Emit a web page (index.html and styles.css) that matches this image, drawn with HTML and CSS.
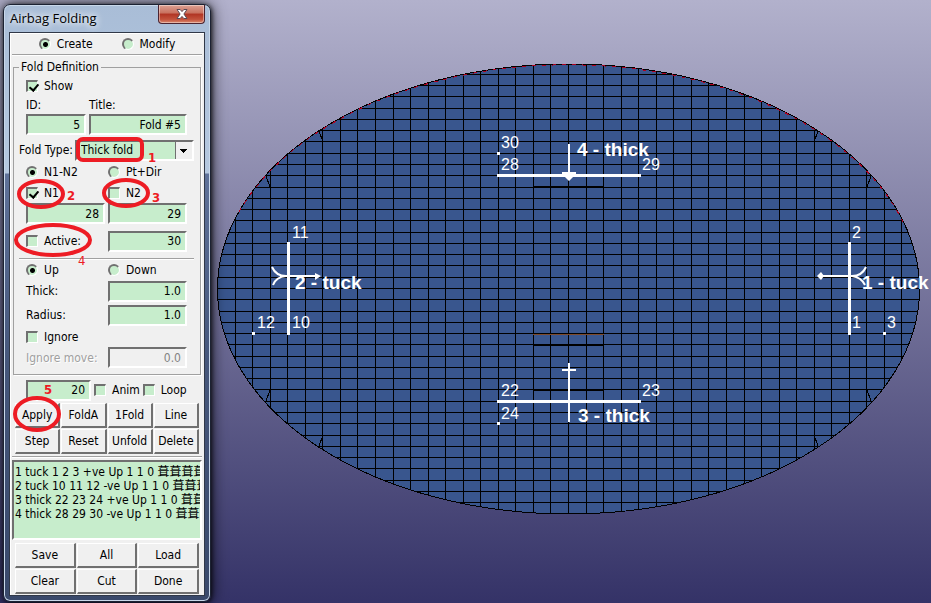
FILE: index.html
```html
<!DOCTYPE html>
<html lang="en">
<head>
    <meta charset="UTF-8">
    <meta name="viewport" content="width=device-width, initial-scale=1.0">
    <title>Airbag Folding</title>
    <link rel="stylesheet" href="styles.css">
</head>
<body>

    <form class="dialog">
        <header class="titlebar">
            <h1>Airbag Folding</h1>
            <button type="button" class="close" aria-label="Close">
                <svg width="12" height="10" viewBox="0 0 12 10">
                    <path d="M1 .5h3.2L6 2.6 7.8.5H11L7.9 5 11 9.5H7.8L6 7.4 4.2 9.5H1L4.1 5z" fill="#fff" stroke="#5b4a55"/>
                </svg>
            </button>
        </header>

        <div class="client">
            <div class="row mode">
                <label><input type="radio" name="mode" checked>Create</label>
                <label><input type="radio" name="mode">Modify</label>
            </div>

            <fieldset>
                <legend>Fold Definition</legend>
                <div class="row"><label><input type="checkbox" checked>Show</label></div>
                <div class="row title-grid">
                    <label for="fold-id">ID:</label>
                    <label for="fold-title">Title:</label>
                    <input type="text" id="fold-id" value="5">
                    <input type="text" id="fold-title" value="Fold #5">
                </div>
                <div class="row type">
                    <label for="fold-type">Fold Type:</label>
                    <select id="fold-type">
                        <option>Thick fold</option>
                    </select>
                </div>
                <div class="row pair">
                    <label><input type="radio" name="plane" checked>N1-N2</label>
                    <label><input type="radio" name="plane">Pt+Dir</label>
                </div>
                <div class="row pair">
                    <label><input type="checkbox" checked>N1</label>
                    <label><input type="checkbox">N2</label>
                </div>
                <div class="row pair">
                    <input type="text" value="28" aria-label="N1">
                    <input type="text" value="29" aria-label="N2">
                </div>
                <div class="row pair active">
                    <label><input type="checkbox">Active:</label>
                    <input type="text" value="30" aria-label="Active node">
                </div>
                <hr>
                <div class="row pair direction">
                    <label><input type="radio" name="direction" checked>Up</label>
                    <label><input type="radio" name="direction">Down</label>
                </div>
                <div class="row pair value">
                    <label for="thick">Thick:</label>
                    <input type="text" id="thick" value="1.0">
                </div>
                <div class="row pair value">
                    <label for="radius">Radius:</label>
                    <input type="text" id="radius" value="1.0">
                </div>
                <div class="row"><label><input type="checkbox">Ignore</label></div>
                <div class="row pair">
                    <label for="ignore-move" class="disabled">Ignore move:</label>
                    <input type="text" id="ignore-move" value="0.0" disabled>
                </div>
            </fieldset>

            <div class="row steps">
                <input type="text" value="20" aria-label="Steps">
                <label><input type="checkbox">Anim</label>
                <label><input type="checkbox">Loop</label>
            </div>

            <div class="buttons four">
                <button type="button">Apply</button>
                <button type="button">FoldA</button>
                <button type="button">1Fold</button>
                <button type="button">Line</button>
                <button type="button">Step</button>
                <button type="button">Reset</button>
                <button type="button">Unfold</button>
                <button type="button">Delete</button>
            </div>

            <hr>

            <select class="folds" size="5" aria-label="Folds">
                <option>1 tuck 1 2 3 +ve Up 1 1 0 葺葺葺葺</option>
                <option>2 tuck 10 11 12 -ve Up 1 1 0 葺葺葺</option>
                <option>3 thick 22 23 24 +ve Up 1 1 0 葺葺</option>
                <option>4 thick 28 29 30 -ve Up 1 1 0 葺葺</option>
            </select>

            <div class="buttons three">
                <button type="button">Save</button>
                <button type="button">All</button>
                <button type="button">Load</button>
                <button type="button">Clear</button>
                <button type="button">Cut</button>
                <button type="button">Done</button>
            </div>
        </div>

        <svg class="marks" width="208" height="596" viewBox="3 4 208 596">
            <rect x="78" y="139" width="64" height="21" rx="5"/>
            <ellipse cx="41" cy="194" rx="22" ry="13"/>
            <ellipse cx="126" cy="193" rx="22" ry="13"/>
            <ellipse cx="53" cy="240" rx="37" ry="15"/>
            <ellipse cx="37" cy="414" rx="22" ry="16"/>
            <text x="148" y="162">1</text>
            <text x="67" y="200">2</text>
            <text x="152" y="202">3</text>
            <text x="78" y="265" class="thin">4</text>
            <text x="44" y="394">5</text>
        </svg>
    </form>

    <main class="view">
        <svg viewBox="212 0 719 603">
            <defs>
                <clipPath id="bag"><ellipse cx="568.5" cy="289" rx="351" ry="225"/></clipPath>
            </defs>
            <ellipse class="cloth" cx="568.5" cy="289" rx="351" ry="225"/>
            <path id="mesh" class="mesh" clip-path="url(#bag)"/>
            <path class="mesh" d="M319 131L323 142M266 176L270 187M319 446L323 435M266 401L270 390M818 131L814 142M871 176L867 187M818 446L814 435M871 401L867 390"/>
            <path class="crease" d="M533 187H604M533 345H604M533 390H604"/>
            <path class="crease edge" d="M533 334.5H604"/>
            <ellipse class="outline" cx="568.5" cy="289" rx="351" ry="225"/>
            <path class="seam" d="M239 212A351 225 0 0 1 904 224"/>

            <g class="line">
                <path d="M497 175.5H641M497 401.5H641M288.5 242V335M849.5 242V335"/>
                <path class="arrow" d="M569 144V178M569 363V422M562 370H576M280 276H318M820 276H857"/>
                <path class="fork" d="M272 267Q276 276 286 276Q276 277 273 285M866 267Q862 276 852 276Q861 277 865 285"/>
            </g>
            <g class="tip">
                <path d="M562 172H576V174L569 181L562 174ZM315 273L321 276L315 280ZM821 272L817 276L821 280L824 276Z"/>
                <path d="M497 152h3v3h-3zM497 422h3v3h-3zM252 332h3v3h-3zM883 332h3v3h-3z"/>
            </g>
            <g class="node">
                <text x="501" y="148">30</text>
                <text x="501" y="170">28</text>
                <text x="642" y="170">29</text>
                <text x="292" y="238">11</text>
                <text x="257" y="328">12</text>
                <text x="292" y="328">10</text>
                <text x="852" y="238">2</text>
                <text x="852" y="328">1</text>
                <text x="887" y="328">3</text>
                <text x="501" y="396">22</text>
                <text x="642" y="396">23</text>
                <text x="501" y="419">24</text>
            </g>
            <g class="fold">
                <text x="577" y="156">4 - thick</text>
                <text x="295" y="289">2 - tuck</text>
                <text x="862" y="289">1 - tuck</text>
                <text x="578" y="422">3 - thick</text>
            </g>
        </svg>
    </main>

    <script>
        // element edges, 40 columns by 40 rows around the bag centre
        let d = '';
        for (let i = -20; i <= 20; i++) {
            const x = Math.floor(568.5 + i * 17.55) + 0.5;
            const y = Math.floor(288.5 + i * 11.27) + 0.5;
            d += `M${x} 60V520M215 ${y}H925`;
        }
        document.getElementById('mesh').setAttribute('d', d);
    </script>

</body>
</html>
```

FILE: styles.css
```css
* {
    box-sizing: border-box;
}

body {
    margin: 0;
    min-height: 100vh;
    display: flex;
    align-items: flex-start;
    overflow: hidden;
    background: linear-gradient(#b2b1cc, #343267);
    font-family: "DejaVu Sans Condensed", "Noto Sans CJK SC", sans-serif;
    font-size: 12px;
    color: #000;
}

.dialog {
    position: relative;
    flex: 0 0 208px;
    margin: 4px 1px 3px 3px;
    padding: 0 5px 5px;
    border: 1px solid #1c2232;
    border-radius: 7px;
    background: linear-gradient(#a9bdd7 0, #b5c8df 168px, #5f7299 169px, #46577b 60%, #39496b);
    box-shadow: inset 0 0 0 1px #c9d8ea, 1px 1px 4px rgba(0, 0, 0, 0.7), 0 0 16px rgba(0, 0, 0, 0.8);
}

.titlebar {
    display: flex;
    justify-content: space-between;
    align-items: flex-start;
    height: 27px;
    padding-left: 1px;
}

h1 {
    margin: 0;
    font-family: "Open Sans", sans-serif;
    font-size: 13px;
    font-weight: normal;
    line-height: 26px;
    text-shadow: 0 0 6px #fff, 0 0 8px #fff;
}

.close {
    display: flex;
    justify-content: center;
    align-items: center;
    width: 47px;
    height: 19px;
    padding: 0;
    border: 1px solid #4b2430;
    border-top: 0;
    border-radius: 0 0 4px 4px;
    background: linear-gradient(#dda193, #c8705e 45%, #b03423 50%, #c2523c 80%, #dc8a70);
    box-shadow: inset 0 0 0 1px rgba(255, 255, 255, 0.4);
}

.client {
    padding: 0 2px 1px;
    border: 1px solid #303848;
    background: #f0f0f0;
    box-shadow: inset 1px 1px #fff;
}

.row {
    display: flex;
    align-items: center;
    height: 20px;
}

.row label {
    display: flex;
    align-items: center;
    gap: 6px;
    white-space: nowrap;
}

.mode {
    justify-content: center;
    gap: 29px;
    height: 22px;
    border-bottom: 1px solid #a0a0a0;
    box-shadow: 0 1px #fff;
}

hr {
    margin: 2px 0;
    border: 0;
    border-top: 1px solid #a0a0a0;
    border-bottom: 1px solid #fff;
}

fieldset {
    min-width: 0;
    margin: 5px 1px;
    padding: 2px 6px 6px 12px;
    border: 1px solid #a0a0a0;
    box-shadow: 1px 1px #fff;
}

legend {
    margin-left: -7px;
    padding: 0 2px;
    line-height: 14px;
}

input {
    margin: 0;
    font: inherit;
}

input[type="text"] {
    width: 100%;
    min-width: 0;
    height: 21px;
    padding: 0 4px;
    border: 2px solid #fff;
    border-top-color: #707070;
    border-left-color: #707070;
    border-radius: 0;
    background: #c7edcc;
    text-align: right;
}

input[type="text"]:disabled {
    background: #f0f0f0;
    color: #838383;
}

input[type="checkbox"],
input[type="radio"] {
    flex: none;
    appearance: none;
    width: 12px;
    height: 12px;
    border: 1px solid #fff;
    border-top: 2px solid #707070;
    border-left: 2px solid #707070;
    background: #c7edcc;
}

input[type="radio"] {
    border-radius: 50%;
}

input[type="radio"]:checked {
    background: radial-gradient(circle, #000 2px, #c7edcc 3px);
}

input[type="checkbox"]:checked::before {
    content: "";
    display: block;
    width: 4px;
    height: 7px;
    margin-left: 3px;
    border: solid #000;
    border-width: 0 2px 2px 0;
    transform: rotate(40deg);
}

.title-grid {
    display: grid;
    grid-template-columns: 60px 98px;
    grid-template-rows: 18px 21px;
    column-gap: 3px;
    height: 43px;
    align-content: start;
}

.type {
    gap: 2px;
    height: 22px;
    margin-left: -7px;
}

#fold-type {
    flex: 1;
    height: 21px;
    min-width: 0;
    padding: 0 4px;
    appearance: none;
    border: 2px solid #fff;
    border-top-color: #707070;
    border-left-color: #707070;
    border-radius: 0;
    background:
        conic-gradient(from -45deg at 50% 100%, #000 90deg, transparent 0) right 5px top 7px / 7px 4px no-repeat,
        linear-gradient(#707070, #707070) right 16px top / 1px 100% no-repeat,
        linear-gradient(#f0f0f0, #f0f0f0) right / 16px 100% no-repeat,
        #c7edcc;
    font: inherit;
}

.pair {
    display: grid;
    grid-template-columns: 79px 79px;
    column-gap: 3px;
    height: 21px;
}

.pair.active {
    height: 34px;
}

.pair.value {
    height: 24px;
}

.pair.direction {
    height: 19px;
}

fieldset hr {
    margin: 0 0 0 -7px;
}

.disabled {
    color: #a0a0a0;
    text-shadow: 1px 1px #fff;
}

.steps {
    gap: 3px;
    padding-left: 14px;
}

.steps input[type="text"] {
    width: 65px;
}

.buttons {
    display: grid;
    gap: 1px;
    padding: 3px 3px 0;
}

.four {
    grid-template-columns: repeat(4, 1fr);
}

.three {
    grid-template-columns: repeat(3, 1fr);
}

.buttons button {
    height: 25px;
    padding: 0;
    border: 1px solid #fff;
    border-right: 2px solid #707070;
    border-bottom: 2px solid #707070;
    background: #f0f0f0;
    font: inherit;
}

.folds {
    display: block;
    width: 100%;
    height: 80px;
    padding: 0;
    overflow: hidden;
    border: 2px solid #fff;
    border-top-color: #707070;
    border-left-color: #707070;
    border-radius: 0;
    background: #c7edcc;
    font: inherit;
}

.folds option {
    height: 14px;
    min-height: 14px;
    padding: 0 1px;
    overflow: visible;
    line-height: 12px;
}

/* red call-outs lie over the dialog */
.marks {
    position: absolute;
    top: -1px;
    left: -1px;
    fill: none;
    stroke: #ed1c24;
    stroke-width: 4px;
    pointer-events: none;
}

.marks text {
    fill: #ed1c24;
    stroke: none;
    font-family: "DejaVu Sans Condensed", sans-serif;
    font-size: 13px;
    font-weight: bold;
}

.marks .thin {
    font-weight: normal;
}

.view {
    flex: 1;
    min-width: 0;
}

.view svg {
    display: block;
    width: 100%;
    height: 100vh;
}

.cloth {
    fill: #39568e;
}

.mesh,
.outline {
    fill: none;
    stroke: #000;
    shape-rendering: crispEdges;
}

.crease {
    stroke: #000;
    stroke-width: 2px;
}

.crease.edge {
    stroke: #7d4a2c;
    stroke-width: 1px;
}

.seam {
    fill: none;
    stroke: #b00020;
    stroke-dasharray: 4 6;
    shape-rendering: crispEdges;
}

.line {
    fill: none;
    stroke: #fff;
    stroke-width: 3px;
}

.arrow,
.fork {
    stroke-width: 2px;
}

.tip,
.node,
.fold {
    fill: #fff;
}

.node,
.fold {
    font-family: "Liberation Sans", Arial, sans-serif;
    font-size: 16px;
}

.fold {
    font-size: 19px;
    font-weight: bold;
}
```
